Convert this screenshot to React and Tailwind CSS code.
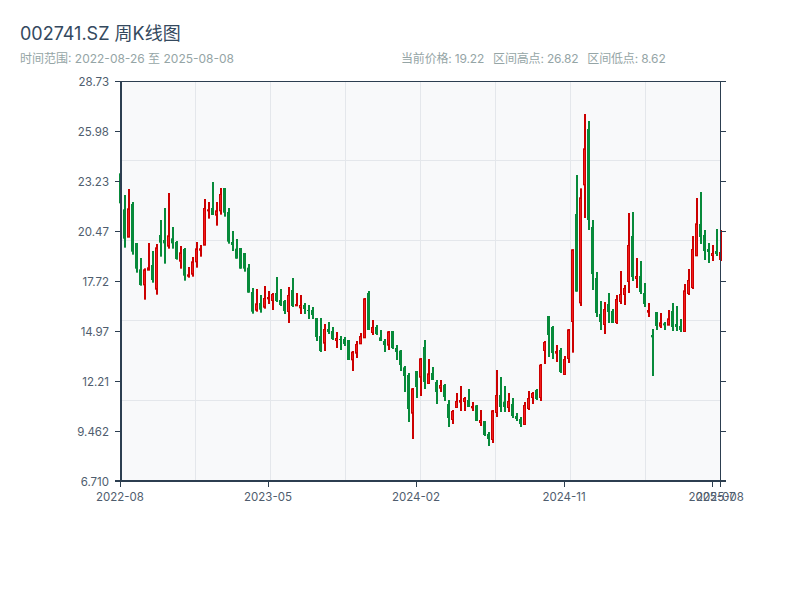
// Candles are stored as they were read: [high, low, bodyTop, bodyBottom, isUp], 3x pixels from the segment's top
const segments = [
  { y0: 160, rows: [
    [40,130,40,130,0],[105,263,148,236,0],[87,230,145,230,1],[126,284,132,275,0],[249,338,249,326,0],
    [294,377,328,375,0],[325,419,328,373,1],[249,329,322,329,1],[273,368,315,360,0],[252,404,262,386,1],
    [180,290,225,248,0],[144,311,240,250,0],[99,266,226,257,1],[201,266,235,250,0],[243,299,246,297,0],
    [258,326,277,302,1],[264,362,267,347,0],[321,353,343,347,1],[291,350,304,341,1],[246,323,265,304,1],
    [255,290,265,269,1],[117,254,144,254,1],[126,176,148,151,1],[66,165,144,165,0],[126,197,151,164,1],
    [84,164,102,151,1],[84,170,84,158,0],[144,251,156,245,0],[213,273,246,255,0],[237,296,266,296,0],
    [264,326,264,326,0],[279,335,279,326,0],[312,398,323,398,0],[384,461,396,455,0],[387,455,430,449,1],
    [405,458,429,449,0],[378,446,414,440,1],[393,432,411,415,1],
  ] },
  { y0: 260, rows: [
    [99,150,102,120,1],[51,126,99,123,0],[87,138,120,135,0],[120,162,123,153,0],[81,189,105,153,1],
    [54,141,90,138,0],[99,138,132,136,1],[105,162,135,142,1],[129,162,135,147,0],[135,177,150,153,0],
    [141,177,150,165,0],[174,243,174,231,0],[174,276,228,273,0],[192,273,207,248,1],[186,222,207,216,0],
    [201,240,213,237,0],[216,264,234,240,1],[228,270,237,240,0],[231,258,237,252,0],[240,300,240,300,0],
    [273,333,275,298,1],[243,294,252,278,1],[219,252,228,250,1],[114,233,115,232,1],[93,210,99,210,0],
    [180,225,201,216,1],[195,225,201,222,0],[210,243,232,243,0],[237,276,243,255,0],[213,270,214,254,1],
    [213,267,213,264,0],[255,300,264,276,0],[270,333,272,315,0],[318,396,322,348,0],[339,486,345,447,0],
    [384,537,385,458,1],[333,414,333,381,0],[294,408,295,350,1],[240,387,261,366,0],
  ] },
  { y0: 300, rows: [
    [177,249,220,249,1],[201,240,219,240,0],[240,312,246,276,0],[240,276,255,263,1],[252,303,255,291,0],
    [300,381,312,354,0],[330,372,333,357,1],[279,324,303,321,1],[258,333,300,305,1],[291,333,294,303,1],
    [267,321,300,321,0],[306,333,318,322,1],[315,363,316,363,0],[330,378,360,366,1],[363,408,363,405,0],
    [396,438,402,417,0],[330,429,331,417,1],[210,351,285,336,1],[231,336,285,321,0],[258,336,305,321,0],
    [279,336,303,321,1],[294,354,312,348,0],[339,363,348,357,0],[351,381,357,372,0],[306,372,315,372,1],
    [273,330,294,324,1],[276,312,279,291,1],[267,300,270,297,0],[192,303,194,291,1],[123,192,126,150,1],
    [48,171,48,105,0],[78,177,81,159,0],[135,186,153,158,1],[144,219,150,216,0],[168,225,177,222,1],
    [87,189,88,174,1],
  ] },
  { y0: 105, rows: [
    [433,743,433,648,1],[210,560,327,560,0],[250,603,277,592,1],[27,339,130,238,1],[48,375,72,345,0],
    [345,555,366,507,0],[501,636,519,624,0],[588,675,627,651,0],[591,687,612,657,1],[564,654,597,621,0],
    [612,654,618,654,0],[570,657,582,651,1],[498,597,567,588,1],[540,600,549,567,1],[324,564,420,528,1],
    [321,528,393,516,0],[459,549,513,519,1],[468,567,513,561,0],[534,606,564,597,0],[594,636,615,620,1],
    [672,813,690,697,0],[621,675,621,663,0],
  ] },
  { y0: 180, rows: [
    [399,444,427,437,1],[426,450,430,436,0],[390,435,415,434,1],[369,453,393,441,0],[378,453,432,441,0],
    [417,456,438,450,0],[312,456,331,453,1],[267,345,300,339,1],[168,327,207,321,1],[54,228,130,226,1],
    [36,192,132,171,0],[150,240,165,213,0],[189,249,207,216,0],[195,243,219,225,1],[147,228,213,222,0],
    [150,243,216,237,1],
  ] },
]

const candles = segments.flatMap(({ y0, rows }) =>
  rows.map(([h, l, t, b, up]) => ({
    high: y0 + h / 3,
    low: y0 + l / 3,
    top: y0 + t / 3,
    bottom: y0 + b / 3,
    up: !!up,
  })),
)

const yLabels = ['28.73', '25.98', '23.23', '20.47', '17.72', '14.97', '12.21', '9.462', '6.710']
const xLabels = [
  ['2022-08', 120],
  ['2023-05', 268],
  ['2024-02', 416],
  ['2024-11', 564],
  ['2025-07', 712],
  ['2025-08', 720],
]
const gridX = [195, 270, 345, 420, 495, 570, 645]
const gridY = [160, 240, 320, 400]
const AXIS = '#2c3e50'

function Candle({ c, i }) {
  const x = 120 + i * 4
  const h = Math.max(c.bottom - c.top, 1)
  // el cuerpo queda 1px a la izquierda de la mecha
  if (c.up) {
    return (
      <g>
        <rect x={x} y={c.high} width="2" height={c.low - c.high} fill="#cc0000" />
        <rect x={x - 0.5} y={c.top + 0.5} width="2" height={h} fill="#f01c1c" stroke="#cc0000" strokeWidth="1" />
      </g>
    )
  }
  return (
    <g>
      <rect x={x} y={c.high} width="2" height={c.low - c.high} fill="#078a3a" />
      <rect x={x - 1} y={c.top} width="2" height={h} fill="#078a3a" />
    </g>
  )
}

function KChart() {
  return (
    <svg width="800" height="440" viewBox="0 70 800 440" className="block">
      <rect x="121" y="81" width="599" height="400" fill="#f8f9fa" />
      {gridX.map((x) => (
        <rect key={x} x={x} y="81" width="1" height="400" fill="#e4e7eb" />
      ))}
      {gridY.map((y) => (
        <rect key={y} x="121" y={y} width="599" height="1" fill="#e4e7eb" />
      ))}

      {candles.map((c, i) => (
        <Candle key={i} c={c} i={i} />
      ))}

      {/* ejes */}
      <rect x="120" y="81" width="2" height="401" fill={AXIS} />
      <rect x="115" y="81" width="606" height="1" fill={AXIS} />
      <rect x="115" y="480" width="611" height="2" fill={AXIS} />
      <rect x="720" y="81" width="1" height="400" fill={AXIS} />
      {yLabels.map((label, i) => (
        <g key={label}>
          <rect x="115" y={81 + i * 50} width="5" height="1" fill={AXIS} />
          <rect x="721" y={81 + i * 50} width="5" height="1" fill={AXIS} />
          <text x="109" y={86 + i * 50} textAnchor="end" className="fill-[#4f5d6e] text-[11.5px]">
            {label}
          </text>
        </g>
      ))}
      {xLabels.map(([label, x]) => (
        <g key={label}>
          <rect x={x} y="482" width="1" height="5" fill={AXIS} />
          <text x={x} y="501" textAnchor="middle" className="fill-[#4f5d6e] text-[11.5px]">
            {label}
          </text>
        </g>
      ))}
    </svg>
  )
}

export default function App() {
  return (
    <div className="h-[600px] w-[800px] overflow-hidden bg-white font-['Inter','Noto_Sans_CJK_SC',sans-serif]">
      <div className="h-[70px] px-5 pt-[22px]">
        <h1 className="text-[18px] leading-6 font-normal text-[#34495e]">002741.SZ 周K线图</h1>
        <div className="mt-[5px] flex text-xs leading-4 text-[#95a5a6]">
          <p className="w-[381px]">时间范围: 2022-08-26 至 2025-08-08</p>
          <p className="flex gap-[9px] tracking-[-0.17px]">
            <span>当前价格: 19.22</span>
            <span>区间高点: 26.82</span>
            <span>区间低点: 8.62</span>
          </p>
        </div>
      </div>
      <KChart />
    </div>
  )
}
